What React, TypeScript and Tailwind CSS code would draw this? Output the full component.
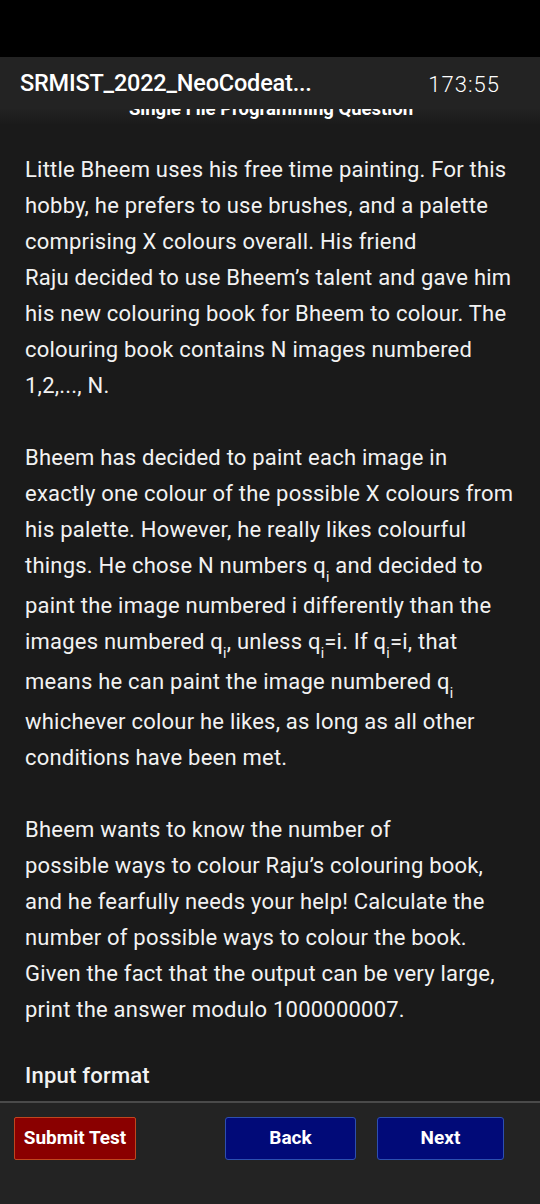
import React from "react";

const Q = () => (
  <span>
    q<sub className="text-[14px] leading-[30px] align-[-5px]">i</sub>
  </span>
);

export default function App() {
  return (
    <div
      className="w-[540px] h-[1204px] flex flex-col bg-[#1a1a1a] overflow-hidden text-[#f2f2f2]"
      style={{ fontFamily: "Roboto, 'Noto Sans', sans-serif" }}
    >
      <div className="h-[57px] bg-black shrink-0" />
      <div className="h-[52px] bg-[#232323] shrink-0 flex items-center justify-between pl-[20px] pr-[40px]">
        <div className="text-[23.5px] font-medium text-white tracking-[-0.2px] mt-[2px]">SRMIST_2022_NeoCodeat...</div>
        <div className="text-[22px] font-light text-white tracking-[1px] mt-[2px]">173:55</div>
      </div>
      <div className="h-[15px] shrink-0 overflow-hidden flex items-end justify-center bg-gradient-to-b from-[#222222] to-[#1b1b1b]">
        <div className="text-[18.5px] font-bold leading-[17px] text-white mb-[6px] pl-[2px]">Single File Programming Question</div>
      </div>
      <div className="flex-1 overflow-hidden px-[25px] pt-[28px] text-[22px] leading-[36px] tracking-[0.22px]">
        <p>
          Little Bheem uses his free time painting. For this<br />
          hobby, he prefers to use brushes, and a palette<br />
          comprising X colours overall. His friend<br />
          Raju decided to use Bheem’s talent and gave him<br />
          his new colouring book for Bheem to colour. The<br />
          colouring book contains N images numbered<br />
          1,2,..., N.
        </p>
        <p className="mt-[36px]">
          Bheem has decided to paint each image in<br />
          exactly one colour of the possible X colours from<br />
          his palette. However, he really likes colourful<br />
          things. He chose N numbers <Q /> and decided to<br />
          paint the image numbered i differently than the<br />
          images numbered <Q />, unless <Q />=i. If <Q />=i, that<br />
          means he can paint the image numbered <Q /><br />
          whichever colour he likes, as long as all other<br />
          conditions have been met.
        </p>
        <p className="mt-[36px]">
          Bheem wants to know the number of<br />
          possible ways to colour Raju’s colouring book,<br />
          and he fearfully needs your help! Calculate the<br />
          number of possible ways to colour the book.<br />
          Given the fact that the output can be very large,<br />
          print the answer modulo 1000000007.
        </p>
        <p className="mt-[30px] font-medium">Input format</p>
      </div>
      <div className="h-[103px] shrink-0 bg-[#232323] border-t-2 border-[#4a4a4a] flex items-start pt-[14px] pl-[14px]">
        <button className="w-[122px] h-[43px] bg-[#8a0000] border border-[#c0461e] rounded-[2px] text-white font-bold text-[19px]">
          Submit Test
        </button>
        <button className="ml-[89px] w-[131px] h-[43px] bg-[#010a78] border border-[#2d4fb0] rounded-[3px] text-white font-bold text-[19px]">
          Back
        </button>
        <button className="ml-[21px] w-[127px] h-[43px] bg-[#010a78] border border-[#2d4fb0] rounded-[3px] text-white font-bold text-[19px]">
          Next
        </button>
      </div>
    </div>
  );
}
